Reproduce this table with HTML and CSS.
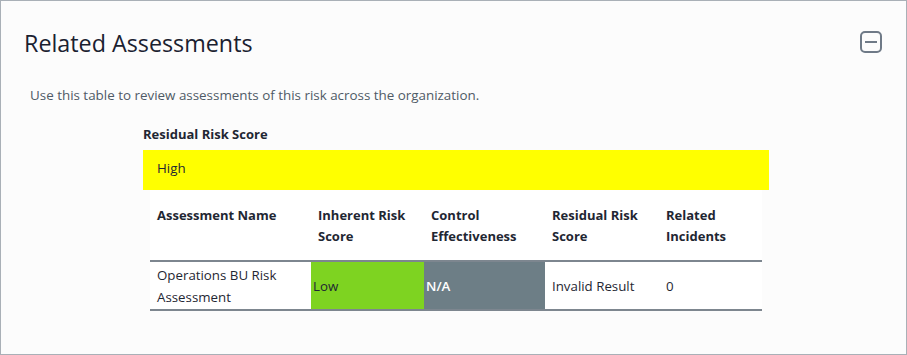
FILE: index.html
```html
<!DOCTYPE html>
<html lang="en">
<head>
<meta charset="utf-8">
<title>Related Assessments</title>
<link rel="stylesheet" href="styles.css">
</head>
<body>
<section class="panel">
  <header class="panel-head">
    <h2 class="panel-title">Related Assessments</h2>
    <button class="collapse-btn" aria-label="Collapse">
      <svg width="22" height="22" viewBox="0 0 22 22" aria-hidden="true">
        <rect x="1" y="1" width="20" height="20" rx="4" ry="4" fill="none" stroke="#6f7a87" stroke-width="2"/>
        <line x1="5" y1="11" x2="17" y2="11" stroke="#6f7a87" stroke-width="2"/>
      </svg>
    </button>
  </header>
  <p class="panel-desc">Use this table to review assessments of this risk across the organization.</p>
  <div class="score-block">
    <div class="score-label">Residual Risk Score</div>
    <div class="score-bar">High</div>
    <table class="assess-table">
      <thead>
        <tr>
          <th class="c1">Assessment Name</th>
          <th class="c2">Inherent Risk Score</th>
          <th class="c3">Control Effectiveness</th>
          <th class="c4">Residual Risk Score</th>
          <th class="c5">Related Incidents</th>
        </tr>
      </thead>
      <tbody>
        <tr>
          <td>Operations BU Risk Assessment</td>
          <td class="cell-low">Low</td>
          <td class="cell-na">N/A</td>
          <td>Invalid Result</td>
          <td>0</td>
        </tr>
      </tbody>
    </table>
  </div>
</section>
</body>
</html>
```

FILE: styles.css
```css
* { box-sizing: border-box; }
html, body { margin: 0; padding: 0; }
body {
  font-family: "Open Sans", "Noto Sans", sans-serif;
  color: #1f2733;
  background: #fcfcfc;
}
.panel {
  width: 907px;
  height: 355px;
  border: 1px solid #a9b0b7;
  background: #fcfcfc;
  padding: 0;
}
.panel-head {
  display: flex;
  align-items: center;
  justify-content: space-between;
  padding: 26px 24px 0 23px;
}
.panel-title {
  margin: 0;
  font-size: 23.3px;
  font-weight: 400;
  line-height: 32px;
  color: #1a2130;
}
.collapse-btn {
  border: 0;
  background: transparent;
  padding: 0;
  width: 22px;
  height: 22px;
  display: flex;
  margin-top: -2px;
}
.panel-desc {
  margin: 26px 0 0 29px;
  font-size: 13.4px;
  line-height: 20px;
  color: #4f5a66;
}
.score-block {
  margin: 19px 0 0 142px;
  width: 626px;
}
.score-label {
  font-size: 13px;
  font-weight: 700;
  line-height: 20px;
  color: #1f2733;
}
.score-bar {
  margin-top: 6px;
  height: 40px;
  background: #ffff00;
  padding: 0 0 5px 14px;
  display: flex;
  align-items: center;
  font-size: 13.3px;
  color: #1f2733;
}
.assess-table {
  margin-left: 7px;
  width: 612px;
  border-collapse: collapse;
  background: #ffffff;
  font-size: 13.3px;
  color: #1f2733;
}
.assess-table th {
  text-align: left;
  font-weight: 700;
  font-size: 13px;
  vertical-align: top;
  line-height: 21px;
  padding: 15px 7px 13px 7px;
  border-bottom: 2px solid #7d868f;
}
.assess-table th.c1 { width: 161px; }
.assess-table th.c2 { width: 113px; }
.assess-table th.c3 { width: 121px; }
.assess-table th.c4 { width: 114px; }
.assess-table th.c5 { width: 103px; }
.assess-table td {
  line-height: 22px;
  padding: 2px 7px 1px 7px;
  vertical-align: middle;
  border-bottom: 2px solid #7d868f;
}
.assess-table td.cell-low {
  background: #7ed321;
  padding-left: 2px;
}
.assess-table td.cell-na {
  background: #6d7e86;
  color: #ffffff;
  font-weight: 600;
  padding-left: 2px;
}
```
